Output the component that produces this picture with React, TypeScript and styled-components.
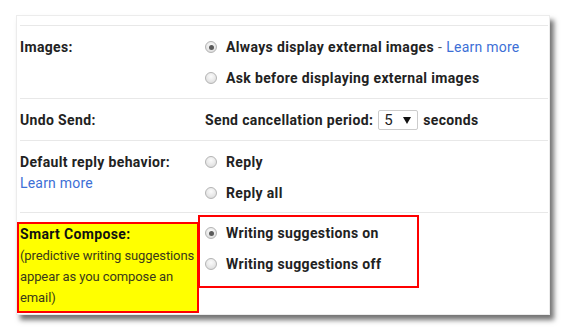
import * as React from 'react';
import styled, { createGlobalStyle } from 'styled-components';

const GlobalStyle = createGlobalStyle`
  html, body {
    margin: 0;
    padding: 0;
    min-height: 100%;
    background: #ffffff;
  }
  body {
    min-height: 335px;
    font-family: Roboto, "Liberation Sans", Arial, sans-serif;
    color: #222222;
  }
`;

const Page = styled.div`
  padding: 15px 0 20px 16px;
`;

const Card = styled.div`
  box-sizing: border-box;
  width: 534px;
  height: 300px;
  padding: 9px 1px 0 3px;
  background: #ffffff;
  border: 1px solid #ececec;
  box-shadow: 4px 5px 5px rgba(0, 0, 0, 0.55);
`;

const Row = styled.div<{ $pad?: string }>`
  display: grid;
  grid-template-columns: 185px 1fr;
  align-items: start;
  border-top: 1px solid #e8e8e8;
  padding: ${({ $pad }) => $pad || '11px 0 10px'};
`;

const Label = styled.div`
  font-size: 14px;
  font-weight: 700;
  letter-spacing: 0.35px;
  line-height: 20px;
  & > a {
    display: block;
    margin-top: 1px;
    letter-spacing: 0.2px;
  }
`;

const HighlightLabel = styled.div`
  box-sizing: border-box;
  margin: 9px 6px 0 -3px;
  height: 91px;
  padding: 0 1px;
  background: #ffff00;
  border: 2px solid #ff0000;
  line-height: 21px;
`;

const LabelTitle = styled.div`
  font-size: 14px;
  font-weight: 700;
  letter-spacing: 0.35px;
  color: #111111;
`;

const LabelNote = styled.div`
  font-size: 13px;
  color: #3a3a1a;
  letter-spacing: -0.1px;
`;

const Options = styled.div`
  display: flex;
  flex-direction: column;
  gap: 11px;
`;

const HighlightOptions = styled(Options)`
  box-sizing: border-box;
  width: 221px;
  margin: 2px 0 0 -7px;
  padding: 6px 0 12px 5px;
  border: 2px solid #ff0000;
  position: relative;
  z-index: 1;
`;

const Option = styled.div`
  display: flex;
  align-items: center;
  gap: 9px;
  height: 20px;
  font-size: 14px;
  font-weight: 700;
  letter-spacing: 0.35px;
  white-space: nowrap;
`;

const Radio = styled.span<{ $checked?: boolean }>`
  box-sizing: border-box;
  position: relative;
  width: 12px;
  height: 12px;
  flex: none;
  border-radius: 50%;
  border: 1px solid #b4b4b4;
  background: radial-gradient(circle at 50% 35%, #fbfbfb 0%, #e6e6e6 60%, #d2d2d2 100%);
  &::after {
    content: '';
    display: ${({ $checked }) => ($checked ? 'block' : 'none')};
    position: absolute;
    left: 2.5px;
    top: 2.5px;
    width: 5px;
    height: 5px;
    border-radius: 50%;
    background: #5a5a5a;
  }
`;

const Dash = styled.span`
  font-weight: 400;
  color: #555555;
  margin: 0 4px;
`;

const Link = styled.a`
  color: #3d6fd6;
  font-weight: 400;
  font-size: 14px;
  letter-spacing: 0.25px;
  text-decoration: none;
  cursor: pointer;
`;

const Inline = styled.div`
  display: flex;
  align-items: center;
  gap: 5px;
  height: 20px;
  font-size: 14px;
  font-weight: 700;
  letter-spacing: 0.35px;
`;

const Select = styled.div`
  box-sizing: border-box;
  display: flex;
  align-items: center;
  justify-content: space-between;
  width: 40px;
  height: 20px;
  padding: 0 6px 0 5px;
  border: 1px solid #cccccc;
  border-radius: 2px;
  font-weight: 400;
  font-size: 15px;
  letter-spacing: 0;
  color: #222222;
`;

const Caret = styled.svg`
  width: 8px;
  height: 7px;
  fill: #111111;
`;

export default function App() {
  return (
    <>
      <GlobalStyle />
      <Page>
        <Card>
          <Row>
            <Label>Images:</Label>
            <Options>
              <Option>
                <Radio $checked />
                <span>
                  Always display external images<Dash>-</Dash>
                  <Link>Learn more</Link>
                </span>
              </Option>
              <Option>
                <Radio />
                Ask before displaying external images
              </Option>
            </Options>
          </Row>
          <Row>
            <Label>Undo Send:</Label>
            <Inline>
              Send cancellation period:
              <Select>
                5
                <Caret viewBox="0 0 8 7">
                  <path d="M0 0h8L4 7z" />
                </Caret>
              </Select>
              seconds
            </Inline>
          </Row>
          <Row $pad="11px 0 9px">
            <Label>
              Default reply behavior:
              <Link>Learn more</Link>
            </Label>
            <Options>
              <Option>
                <Radio />
                Reply
              </Option>
              <Option>
                <Radio />
                Reply all
              </Option>
            </Options>
          </Row>
          <Row $pad="0">
            <HighlightLabel>
              <LabelTitle>Smart Compose:</LabelTitle>
              <LabelNote>
                (predictive writing suggestions appear as you compose an email)
              </LabelNote>
            </HighlightLabel>
            <HighlightOptions>
              <Option>
                <Radio $checked />
                Writing suggestions on
              </Option>
              <Option>
                <Radio />
                Writing suggestions off
              </Option>
            </HighlightOptions>
          </Row>
        </Card>
      </Page>
    </>
  );
}
